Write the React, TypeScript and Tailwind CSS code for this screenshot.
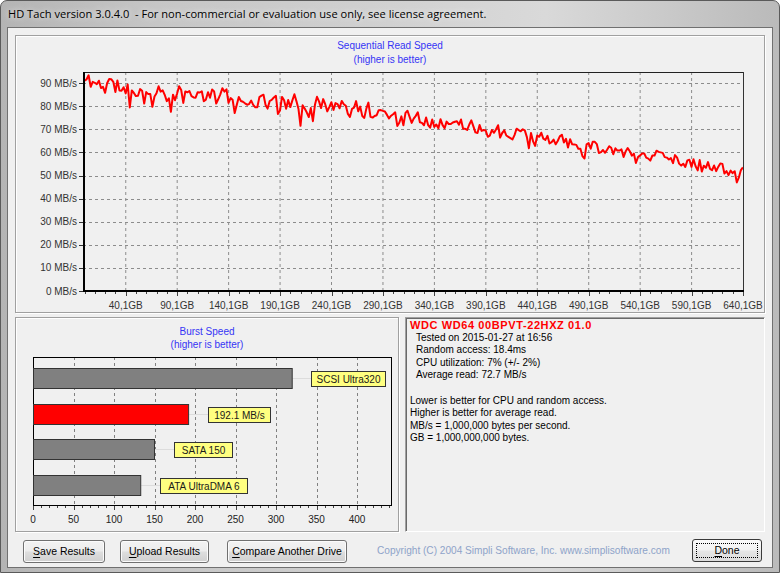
import React from "react";

// noisy read curve, seeded so it is the same every render
function mulberry32(a: number) {
  return () => {
    a |= 0;
    a = (a + 0x6d2b79f5) | 0;
    let t = Math.imul(a ^ (a >>> 15), 1 | a);
    t = (t + Math.imul(t ^ (t >>> 7), 61 | t)) ^ t;
    return ((t ^ (t >>> 14)) >>> 0) / 4294967296;
  };
}

const anchors: [number, number][] = [
  [0, 91], [40, 88], [90, 85.5], [140, 83.5], [190, 82], [240, 80], [290, 77.5],
  [340, 73.5], [390, 70.5], [440, 66.5], [490, 63], [540, 60], [590, 55.5], [615, 53], [640, 50.5],
];

function trend(gb: number) {
  for (let i = 1; i < anchors.length; i++) {
    const [g1, v1] = anchors[i];
    const [g0, v0] = anchors[i - 1];
    if (gb <= g1) return v0 + ((gb - g0) / (g1 - g0)) * (v1 - v0);
  }
  return anchors[anchors.length - 1][1];
}

const gx = (gb: number) => 68.5 + gb * 1.0288;
const gy = (mb: number) => 224 - mb * 2.31;

const readLine = (() => {
  const rnd = mulberry32(11);
  const pts: string[] = [];
  let n = 0;
  for (let gb = 0; gb <= 640; gb += 2) {
    const amp = gb < 280 ? 5 : 3.6;
    n = 0.3 * n + 0.7 * (rnd() - 0.5) * amp * 2;
    let v = trend(gb) + n;
    if (rnd() < 0.14) v -= rnd() * amp * 1.3;
    pts.push(`${gx(gb).toFixed(1)},${gy(v).toFixed(1)}`);
  }
  return pts.join(" ");
})();

const mbTicks = [0, 10, 20, 30, 40, 50, 60, 70, 80, 90];
const gbMajor = Array.from({ length: 13 }, (_, i) => 40.1 + i * 50);
const gbMinor = Array.from({ length: 65 }, (_, i) => 0.1 + i * 10);

function ReadChart() {
  return (
    <svg width={748} height={245}>
      <defs>
        <clipPath id="plot">
          <rect x={68} y={5} width={659} height={219} />
        </clipPath>
      </defs>
      {gbMajor.slice(0, 12).map((g) => (
        <line key={g} x1={gx(g)} x2={gx(g)} y1={5} y2={224} stroke="#8c8c8c" strokeDasharray="3 3" />
      ))}
      {mbTicks.slice(1).map((m) => (
        <line key={m} x1={67} x2={727} y1={Math.round(gy(m)) + 0.5} y2={Math.round(gy(m)) + 0.5} stroke="#8c8c8c" strokeDasharray="3 3" />
      ))}
      <line x1={67} x2={727} y1={5.5} y2={5.5} stroke="#222" />
      <line x1={727.5} x2={727.5} y1={5} y2={224} stroke="#333" />
      <polyline points={readLine} fill="none" stroke="#ff0000" strokeWidth={2} strokeLinejoin="round" clipPath="url(#plot)" />
      <rect x={67} y={5} width={2} height={220} fill="#000" />
      <rect x={67} y={223} width={661} height={2} fill="#000" />
      {mbTicks.map((m) => (
        <g key={m}>
          <line x1={63} x2={67} y1={Math.round(gy(m)) + 0.5} y2={Math.round(gy(m)) + 0.5} stroke="#333" />
          <text x={61} y={gy(m) + 3.5} fontSize={10} textAnchor="end" fill="#333">
            {m} MB/s
          </text>
        </g>
      ))}
      {gbMinor.map((g, i) => (
        <line key={g} x1={Math.round(gx(g)) + 0.5} x2={Math.round(gx(g)) + 0.5} y1={225} y2={(i - 4) % 5 === 0 ? 229 : 227} stroke="#444" />
      ))}
      {gbMajor.map((g) => (
        <text key={g} x={gx(g)} y={241.5} fontSize={10} textAnchor="middle" fill="#333">
          {g.toFixed(1).replace(".", ",")}GB
        </text>
      ))}
    </svg>
  );
}

const bx = (v: number) => 17 + v * 0.81;

const bursts = [
  { v: 320, y: 17, fill: "#808080", label: "SCSI Ultra320", w: 74 },
  { v: 192.1, y: 53, fill: "#ff0000", label: "192.1 MB/s", w: 62 },
  { v: 150, y: 88, fill: "#808080", label: "SATA 150", w: 58 },
  { v: 133, y: 124, fill: "#808080", label: "ATA UltraDMA 6", w: 87 },
];

function BurstChart() {
  return (
    <svg width={382} height={180}>
      {[50, 100, 150, 200, 250, 300, 350, 400].map((v) => (
        <line key={v} x1={Math.round(bx(v)) + 0.5} x2={Math.round(bx(v)) + 0.5} y1={6} y2={154} stroke="#808080" strokeDasharray="3 3" />
      ))}
      <rect x={17.5} y={6.5} width={358} height={148} fill="none" stroke="#000" />
      {bursts.map((b) => {
        const end = bx(b.v);
        const lx = Math.round(end + 19);
        return (
          <g key={b.label}>
            <line x1={end} x2={lx} y1={b.y + 10.5} y2={b.y + 10.5} stroke="#dcdcdc" />
            <rect x={17.5} y={b.y + 0.5} width={end - 17.5} height={20} fill={b.fill} stroke="#333" />
            <rect x={lx + 0.5} y={b.y + 3.5} width={b.w} height={15} fill="#ffff80" stroke="#333" />
            <text x={lx + 0.5 + b.w / 2} y={b.y + 14.5} fontSize={10} textAnchor="middle" fill="#1a1a1a">
              {b.label}
            </text>
          </g>
        );
      })}
      {Array.from({ length: 45 }, (_, i) => i * 10).map((v) => (
        <line key={v} x1={Math.round(bx(v)) + 0.5} x2={Math.round(bx(v)) + 0.5} y1={155} y2={v % 50 === 0 ? 159 : 157} stroke="#444" />
      ))}
      {[0, 50, 100, 150, 200, 250, 300, 350, 400].map((v) => (
        <text key={v} x={bx(v)} y={171.5} fontSize={10} textAnchor="middle" fill="#222">
          {v}
        </text>
      ))}
    </svg>
  );
}

function WinButton({ label, width, first }: { label: string; width: string; first: string }) {
  return (
    <button className={`${width} h-[23px] rounded-[3px] border border-[#707070] bg-[linear-gradient(#f3f3f3_0%,#ececec_48%,#dedede_52%,#d0d0d0_100%)] shadow-[inset_0_0_0_1px_#fbfbfb] text-[10.5px] text-black`}>
      <span className="underline underline-offset-2">{first}</span>
      {label}
    </button>
  );
}

export default function App() {
  return (
    <div className="w-[780px] h-[573px] overflow-hidden bg-white font-['Liberation_Sans',Arial,sans-serif]">
      <div className="flex h-full flex-col rounded-t-[7px] border border-[#5a5a5a] bg-[linear-gradient(90deg,#b4b4b4_0%,#c6c6c6_20%,#cfcfcf_45%,#d9d9d9_70%,#cacaca_85%,#bababa_100%)] px-[6px] pb-[4px]">
        <div className="flex h-[26px] items-center whitespace-pre pl-[1px] font-['Open_Sans',sans-serif] text-[11.1px] text-black [text-shadow:0_0_6px_#ffffff]">
          HD Tach version 3.0.4.0  - For non-commercial or evaluation use only, see license agreement.
        </div>
        <div className="flex flex-1 flex-col border border-[#707070] bg-[#f0f0f0] px-[7px] pt-[7px]">
          <div className="flex h-[278px] flex-col border border-[#a0a0a0] shadow-[inset_1px_1px_0_#ffffff,1px_1px_0_#ffffff]">
            <div className="pt-[3px] text-center text-[10px] leading-[14px] text-[#3535f5]">
              <div>Sequential Read Speed</div>
              <div>(higher is better)</div>
            </div>
            <ReadChart />
          </div>

          <div className="mt-[4px] flex h-[215px] gap-[6px]">
            <div className="flex w-[384px] flex-col border border-[#a0a0a0] shadow-[inset_1px_1px_0_#ffffff,1px_1px_0_#ffffff]">
              <div className="pt-[7px] text-center text-[10px] leading-[13px] text-[#3535f5]">
                <div>Burst Speed</div>
                <div>(higher is better)</div>
              </div>
              <BurstChart />
            </div>
            <div className="flex-1 border border-[#a0a0a0] border-b-white border-r-white pl-[4px] pt-[1px] text-[10px] leading-[12.6px] text-black shadow-[inset_1px_1px_0_#696969]">
              <div className="text-[11px] font-bold tracking-[0.6px] text-[#ff0000]">WDC WD64 00BPVT-22HXZ 01.0</div>
              <div className="ml-[6px]">Tested on 2015-01-27 at 16:56</div>
              <div className="ml-[6px]">Random access: 18.4ms</div>
              <div className="ml-[6px]">CPU utilization: 7% (+/- 2%)</div>
              <div className="ml-[6px]">Average read: 72.7 MB/s</div>
              <div className="h-[12.6px]" />
              <div>Lower is better for CPU and random access.</div>
              <div>Higher is better for average read.</div>
              <div>MB/s = 1,000,000 bytes per second.</div>
              <div>GB = 1,000,000,000 bytes.</div>
            </div>
          </div>

          <div className="mt-[7px] flex h-[23px] items-center">
            <div className="ml-[8px]">
              <WinButton first="S" label="ave Results" width="w-[82px]" />
            </div>
            <div className="ml-[15px]">
              <WinButton first="U" label="pload Results" width="w-[89px]" />
            </div>
            <div className="ml-[18px]">
              <WinButton first="C" label="ompare Another Drive" width="w-[120px]" />
            </div>
            <span className="ml-[30px] text-[10.1px] text-[#8ea3c9]">Copyright (C) 2004 Simpli Software, Inc. www.simplisoftware.com</span>
            <button className="ml-auto mr-[3px] flex h-[23px] w-[70px] items-center justify-center rounded-[3px] border border-[#3a3a3a] bg-[linear-gradient(#fafafa_0%,#f2f2f2_48%,#e6e6e6_52%,#dcdcdc_100%)] p-[3px] text-[10.5px] text-black">
              <span className="flex h-full w-full items-center justify-center border border-dotted border-black">
                <span className="underline underline-offset-2">D</span>one
              </span>
            </button>
          </div>
        </div>
      </div>
    </div>
  );
}
